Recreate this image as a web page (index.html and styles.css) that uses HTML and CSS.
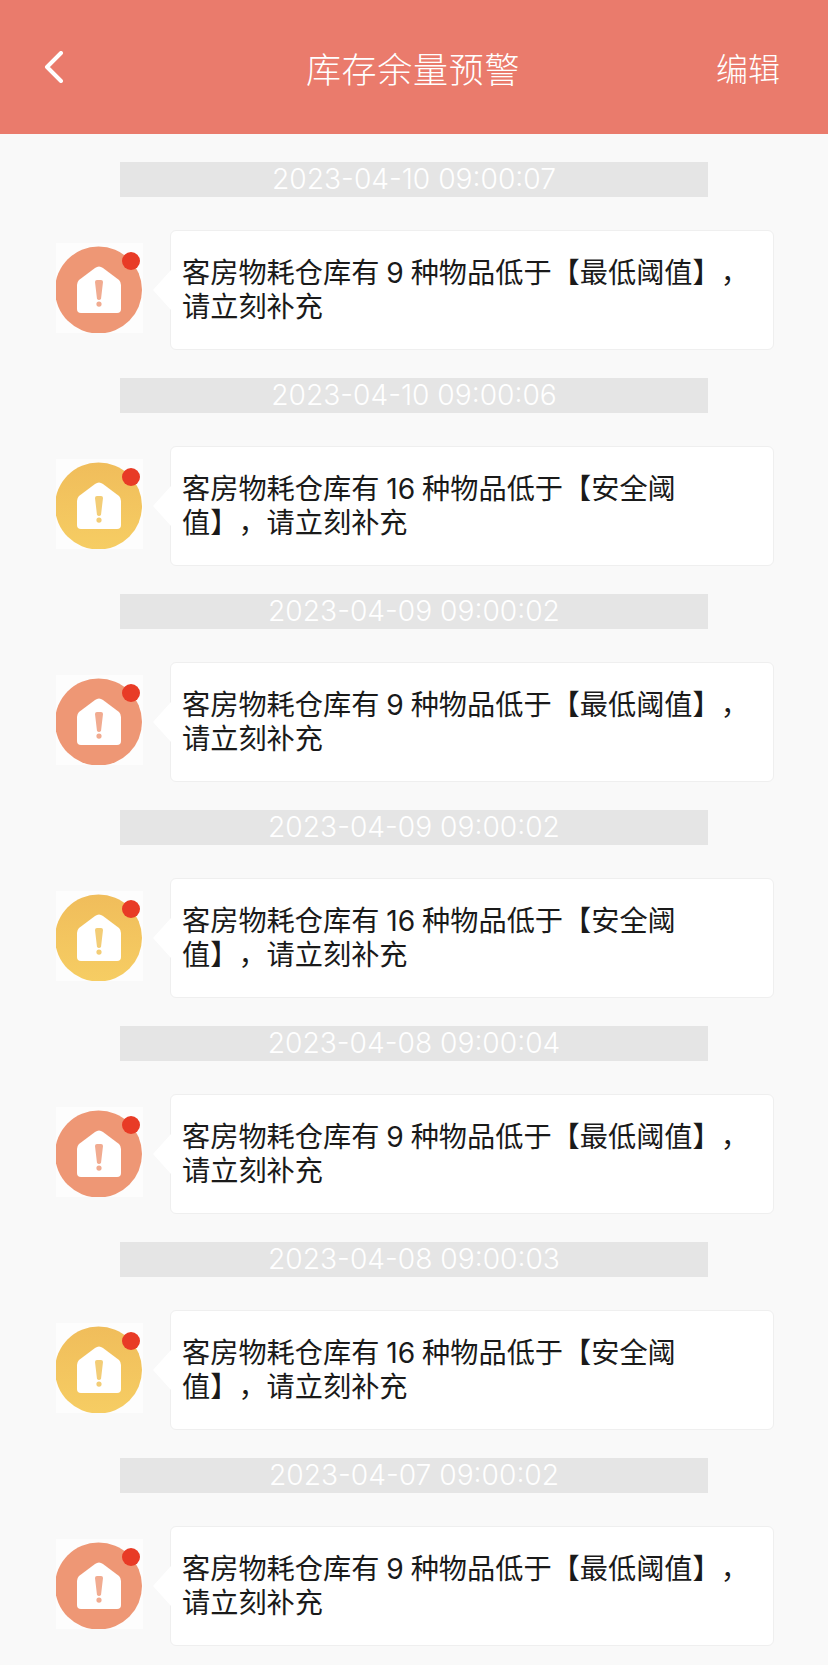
FILE: index.html
```html
<!DOCTYPE html>
<html lang="zh-CN">

<head>
  <meta charset="UTF-8">
  <meta name="viewport" content="width=device-width, initial-scale=1.0">
  <title>库存余量预警</title>
  <link rel="stylesheet" href="styles.css">
</head>

<body>
  <svg class="defs" width="0" height="0">
    <defs>
      <linearGradient id="sun" x1="0" y1="0" x2="0" y2="1">
        <stop offset="0" stop-color="#f0bd5b" />
        <stop offset="1" stop-color="#f6cd63" />
      </linearGradient>
    </defs>
    <symbol id="house" viewBox="0 0 87 90">
      <path d="M21 42 Q21 39 23 37 L39 25 Q43 22 47 25 L63 37 Q65 39 65 42 L65 66 Q65 70 61 70 L25 70 Q21 70 21 66 Z" fill="#fff" />
      <circle cx="75" cy="18" r="9" fill="#e83b26" />
    </symbol>
    <symbol id="alert-red" viewBox="0 0 87 90">
      <circle cx="42.5" cy="47" r="43.5" fill="#ee9775" />
      <use href="#house" />
      <path d="M39 39 Q39 37 41 37 L45 37 Q47 37 47 39 L45 56 Q44 57 43 57 Q42 57 41 56 Z M43 58.5 A2.6 2.6 0 1 1 43 63.7 A2.6 2.6 0 1 1 43 58.5 Z" fill="#f1ab90" />
    </symbol>
    <symbol id="alert-yellow" viewBox="0 0 87 90">
      <circle cx="42.5" cy="47" r="43.5" fill="url(#sun)" />
      <use href="#house" />
      <path d="M39 39 Q39 37 41 37 L45 37 Q47 37 47 39 L45 56 Q44 57 43 57 Q42 57 41 56 Z M43 58.5 A2.6 2.6 0 1 1 43 63.7 A2.6 2.6 0 1 1 43 58.5 Z" fill="#f3cd76" />
    </symbol>
  </svg>

  <header class="topbar">
    <svg class="back" width="20" height="32" viewBox="0 0 20 32">
      <path d="M17 2 L3 16 L17 30" fill="none" stroke="#fff" stroke-width="4" stroke-linecap="round" stroke-linejoin="round" />
    </svg>
    <h1 class="title">库存余量预警</h1>
    <span class="edit">编辑</span>
  </header>

  <main class="list">
    <section class="item">
      <div class="time">2023-04-10 09:00:07</div>
      <div class="msg">
        <svg class="avatar" width="87" height="90"><use href="#alert-red" /></svg>
        <p class="bubble">客房物耗仓库有 9 种物品低于【最低阈值】，请立刻补充</p>
      </div>
    </section>
    <section class="item">
      <div class="time">2023-04-10 09:00:06</div>
      <div class="msg">
        <svg class="avatar" width="87" height="90"><use href="#alert-yellow" /></svg>
        <p class="bubble">客房物耗仓库有 16 种物品低于【安全阈值】，请立刻补充</p>
      </div>
    </section>
    <section class="item">
      <div class="time">2023-04-09 09:00:02</div>
      <div class="msg">
        <svg class="avatar" width="87" height="90"><use href="#alert-red" /></svg>
        <p class="bubble">客房物耗仓库有 9 种物品低于【最低阈值】，请立刻补充</p>
      </div>
    </section>
    <section class="item">
      <div class="time">2023-04-09 09:00:02</div>
      <div class="msg">
        <svg class="avatar" width="87" height="90"><use href="#alert-yellow" /></svg>
        <p class="bubble">客房物耗仓库有 16 种物品低于【安全阈值】，请立刻补充</p>
      </div>
    </section>
    <section class="item">
      <div class="time">2023-04-08 09:00:04</div>
      <div class="msg">
        <svg class="avatar" width="87" height="90"><use href="#alert-red" /></svg>
        <p class="bubble">客房物耗仓库有 9 种物品低于【最低阈值】，请立刻补充</p>
      </div>
    </section>
    <section class="item">
      <div class="time">2023-04-08 09:00:03</div>
      <div class="msg">
        <svg class="avatar" width="87" height="90"><use href="#alert-yellow" /></svg>
        <p class="bubble">客房物耗仓库有 16 种物品低于【安全阈值】，请立刻补充</p>
      </div>
    </section>
    <section class="item">
      <div class="time">2023-04-07 09:00:02</div>
      <div class="msg">
        <svg class="avatar" width="87" height="90"><use href="#alert-red" /></svg>
        <p class="bubble">客房物耗仓库有 9 种物品低于【最低阈值】，请立刻补充</p>
      </div>
    </section>
  </main>
</body>

</html>
```

FILE: styles.css
```css
body {
  margin: 0;
  background: #f9f9f9;
  font-family: "Liberation Sans", "Noto Sans CJK SC", sans-serif;
}

.defs {
  position: absolute;
}

.topbar {
  height: 134px;
  background: #ea7b6c;
  color: #fff;
  position: relative;
  display: flex;
  align-items: center;
  justify-content: space-between;
  padding: 0 48px 0 44px;
  box-sizing: border-box;
}

.title {
  margin: 0;
  padding-right: 2px;
  font-size: 35px;
  font-weight: 300;
  letter-spacing: .7px;
  position: absolute;
  left: 0;
  right: 0;
  text-align: center;
}

.edit {
  font-size: 32px;
  font-weight: 300;
}

.list {
  padding: 28px 54px 19px 56px;
}

.item {
  margin-bottom: 28px;
}

.item:last-child {
  margin-bottom: 0;
}

.time {
  width: 588px;
  height: 35px;
  line-height: 35px;
  margin: 0 auto;
  position: relative;
  left: -1px;
  background: #e5e5e5;
  color: #fff;
  font-family: Inter, sans-serif;
  font-size: 28.2px;
  font-weight: 300;
  text-align: center;
  white-space: nowrap;
}

.msg {
  display: flex;
  align-items: center;
  gap: 27px;
  margin-top: 33px;
}

.avatar {
  flex: none;
  margin-bottom: 4px;
  background: #fdfdfd;
}

.bubble {
  flex: 1;
  height: 120px;
  margin: 0;
  padding: 25px 18px 0 11px;
  box-sizing: border-box;
  position: relative;
  background: #fff;
  border: 1px solid #efefef;
  border-radius: 6px;
  color: #1a1a1a;
  font-family: Inter, "Noto Sans CJK SC", sans-serif;
  font-size: 28.2px;
  line-height: 34px;
  word-spacing: -1px;
  text-spacing-trim: space-all;
}

.bubble::before {
  content: "";
  position: absolute;
  left: -18px;
  top: 39px;
  width: 18px;
  height: 40px;
  background: #fff;
  clip-path: polygon(100% 0, 0 50%, 100% 100%);
}
```
